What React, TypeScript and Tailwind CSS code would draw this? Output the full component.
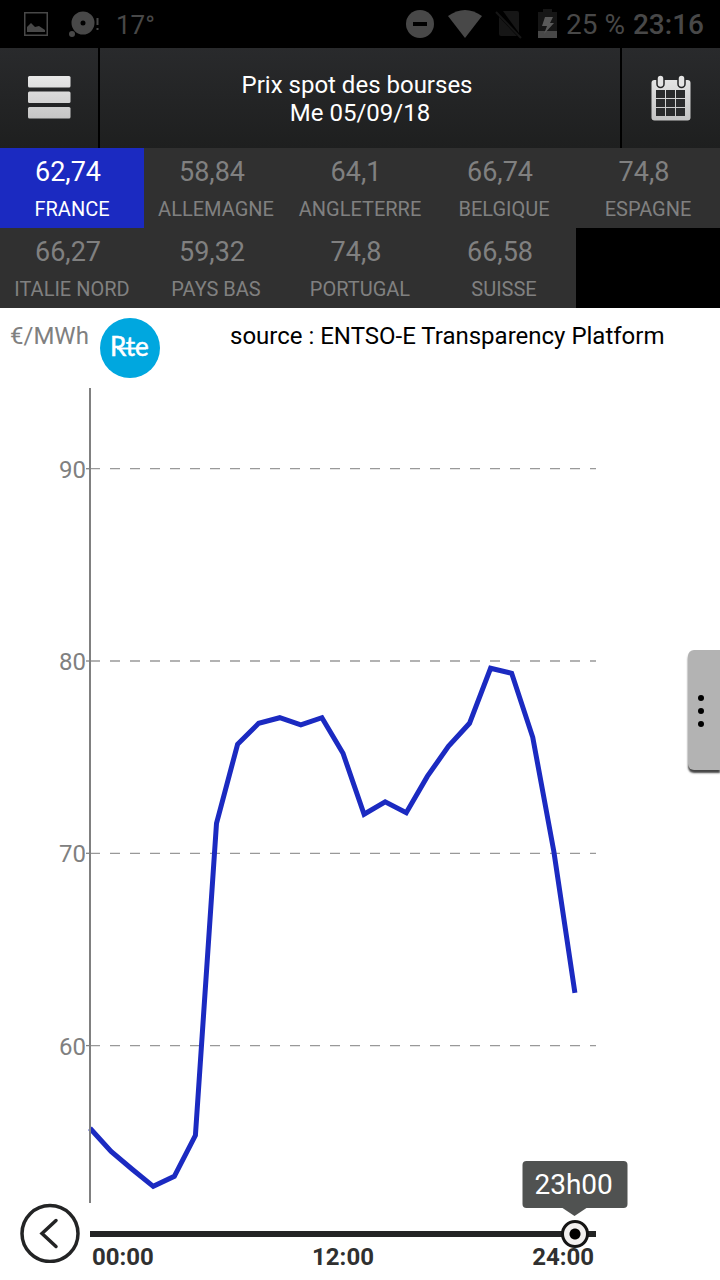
import { useState } from "react";

type Market = { name: string; price: string };

const markets: Market[] = [
  { name: "FRANCE", price: "62,74" },
  { name: "ALLEMAGNE", price: "58,84" },
  { name: "ANGLETERRE", price: "64,1" },
  { name: "BELGIQUE", price: "66,74" },
  { name: "ESPAGNE", price: "74,8" },
  { name: "ITALIE NORD", price: "66,27" },
  { name: "PAYS BAS", price: "59,32" },
  { name: "PORTUGAL", price: "74,8" },
  { name: "SUISSE", price: "66,58" },
];

// hourly prices, €/MWh
const prices = [
  55.7, 54.5, 53.57, 52.68, 53.2, 55.33, 71.56, 75.67, 76.76, 77.05, 76.68,
  77.05, 75.2, 72.03, 72.68, 72.11, 74.0, 75.56, 76.76, 79.62, 79.36, 76.03,
  70.1, 62.74,
];

const ticks = [90, 80, 70, 60];

const LEFT = 90;
const RIGHT = 596;

const xOf = (hour: number) => LEFT + ((RIGHT - LEFT) * hour) / 24;
const yOf = (price: number) => 80.7 + (90 - price) * 19.23;

function StatusBar() {
  return (
    <div className="flex h-12 items-center bg-black pl-6 pr-4 text-[#484848]">
      <svg width="24" height="24" viewBox="0 0 24 24" aria-hidden="true">
        <rect x="0.75" y="0.75" width="22.5" height="22.5" fill="none" stroke="currentColor" strokeWidth="1.5" />
        <path d="M3 20v-5l4-4 4 4 4-1 6 4v2z" fill="currentColor" />
      </svg>
      <svg className="ml-5" width="32" height="28" viewBox="0 0 32 28" aria-hidden="true">
        <circle cx="15" cy="13" r="7" fill="none" stroke="currentColor" strokeWidth="9" />
        <circle cx="4" cy="24" r="3" fill="currentColor" />
        <path d="M29.5 8v7M29.5 18v2" stroke="currentColor" strokeWidth="2" />
      </svg>
      <span className="ml-4 pt-0.5 text-[26px]">17°</span>

      <svg className="ml-auto" width="28" height="28" viewBox="0 0 28 28" aria-hidden="true">
        <circle cx="14" cy="14" r="14" fill="currentColor" />
        <path d="M7 14h14" stroke="black" strokeWidth="4" />
      </svg>
      <svg className="ml-3.5" width="34" height="28" viewBox="0 0 34 28" aria-hidden="true">
        <path d="M0 6Q17-6 34 6L17 28z" fill="currentColor" />
      </svg>
      <svg className="ml-3 text-[#161616]" width="28" height="30" viewBox="0 0 28 30" aria-hidden="true">
        <path d="M9 2h14q2 0 2 2v20zM5 8l18 19H7q-2 0-2-2z" fill="currentColor" />
        <path d="M2 3l25 26" stroke="currentColor" strokeWidth="2" />
      </svg>
      <svg className="ml-4" width="20" height="30" viewBox="0 0 20 30" aria-hidden="true">
        <path d="M0 3h5V0h9v3h5v20H0z" fill="#161616" />
        <path d="M0 22h19v7H0z" fill="currentColor" />
        <path d="M7 8h8l-3 6h4L6 25l3-8H4z" fill="#5a5a5a" />
      </svg>
      <span className="ml-2 pt-0.5 text-[28px]">25 %</span>
      <span className="ml-2 pt-0.5 text-[28px] font-medium">23:16</span>
    </div>
  );
}

function Header() {
  return (
    <header className="flex h-[100px] bg-linear-to-b from-[#292a2c] to-[#1e1f1f]">
      <button
        type="button"
        aria-label="Menu"
        className="flex w-[100px] items-center justify-center border-r-2 border-black"
      >
        <svg width="44" height="44" viewBox="0 0 44 44" aria-hidden="true">
          <defs>
            <linearGradient id="metal" x1="0" y1="0" x2="0" y2="44" gradientUnits="userSpaceOnUse">
              <stop offset="0" stopColor="#e8e8e8" />
              <stop offset="1" stopColor="#c4c4c4" />
            </linearGradient>
          </defs>
          <g fill="url(#metal)">
            <rect x="1" y="0" width="42.5" height="11.5" rx="1.5" />
            <rect x="1" y="15.5" width="42.5" height="11.5" rx="1.5" />
            <rect x="1" y="31" width="42.5" height="11.5" rx="1.5" />
          </g>
        </svg>
      </button>
      <h1 className="flex-1 self-center pt-0.5 text-center text-2xl leading-7 text-white">
        Prix spot des bourses&nbsp;
        <br />
        Me 05/09/18
      </h1>
      <button
        type="button"
        aria-label="Calendrier"
        className="flex w-[100px] items-center justify-center border-l-2 border-black"
      >
        <svg width="40" height="46" viewBox="0 0 40 46" aria-hidden="true">
          <rect x="0.5" y="5" width="39" height="40.5" rx="3" fill="url(#metal)" />
          <g fill="#2a2b2c">
            {[15, 24, 33].map((y) =>
              [5, 15, 25].map((x) => (
                <rect key={`${x}-${y}`} x={x} y={y} width="9" height="8" />
              ))
            )}
          </g>
          <g fill="#e4e4e4" stroke="#242526" strokeWidth="1.5">
            <rect x="6" y="0" width="7" height="12.5" rx="3.5" />
            <rect x="27" y="0" width="7" height="12.5" rx="3.5" />
          </g>
        </svg>
      </button>
    </header>
  );
}

function MarketTile({
  market,
  active,
  onSelect,
}: {
  market: Market;
  active: boolean;
  onSelect: () => void;
}) {
  return (
    <button
      type="button"
      aria-pressed={active}
      onClick={onSelect}
      className={`h-20 whitespace-nowrap text-center ${
        active ? "bg-[#1b2ac1] text-white" : "bg-[#303030] text-[#808080]"
      }`}
    >
      <span className="block h-11 pr-2 text-[27px] leading-[48px]">{market.price}</span>
      <span className="block h-9 text-xl leading-[34px]">{market.name}</span>
    </button>
  );
}

function RteLogo() {
  return (
    <svg width="60" height="60" viewBox="0 0 60 60" role="img" aria-label="Rte">
      <circle cx="30" cy="30" r="30" fill="#00a7df" />
      <text
        x="10"
        y="38"
        fill="white"
        stroke="white"
        strokeWidth="0.5"
        fontFamily="Lato, sans-serif"
        fontSize="26"
      >
        Rte
      </text>
      <path d="M17 30.5h29" stroke="white" strokeWidth="2" />
    </svg>
  );
}

function PriceChart() {
  const points = prices.map((p, h) => `${xOf(h)},${yOf(p)}`).join(" ");

  return (
    <svg className="block w-full" viewBox="0 0 720 815" role="img" aria-label="Prix spot par heure">
      {ticks.map((tick) => (
        <g key={tick}>
          <text x="86" y={yOf(tick) + 9} textAnchor="end" fontSize="24" fill="#808080">
            {tick}
          </text>
          <path
            d={`M90 ${yOf(tick)}H${RIGHT}`}
            stroke="#999999"
            strokeWidth="1.3"
            strokeDasharray="10 10"
          />
          <path d={`M86 ${yOf(tick)}h4`} stroke="#808080" strokeWidth="1.3" />
        </g>
      ))}
      <polyline points={points} fill="none" stroke="#1b2ac1" strokeWidth="5" />
      <path d="M90 0V815" stroke="#808080" strokeWidth="2" />
    </svg>
  );
}

function HourSlider({ hour, onChange }: { hour: number; onChange: (h: number) => void }) {
  return (
    <div className="flex items-start pl-5 pr-[124px]">
      <button type="button" aria-label="Heure précédente" onClick={() => onChange(Math.max(0, hour - 1))}>
        <svg width="60" height="60" viewBox="0 0 60 60" fill="none" stroke="#232425" aria-hidden="true">
          <circle cx="30" cy="30.5" r="28" strokeWidth="3.5" />
          <path d="M36 17.5L22 30.5L36 43.5" strokeWidth="3.5" strokeLinecap="round" />
        </svg>
      </button>
      <div className="relative ml-2.5 flex-1 pt-7">
        <div className="h-1.5 bg-[#232425]" />
        <input
          type="range"
          aria-label="Heure"
          min={0}
          max={24}
          value={hour}
          onChange={(e) => onChange(Number(e.target.value))}
          className="absolute -left-3.5 top-[17px] h-7 w-[calc(100%+28px)] appearance-none bg-transparent [&::-webkit-slider-thumb]:size-7 [&::-webkit-slider-thumb]:appearance-none [&::-webkit-slider-thumb]:rounded-full [&::-webkit-slider-thumb]:border-3 [&::-webkit-slider-thumb]:border-[#151515] [&::-webkit-slider-thumb]:bg-[radial-gradient(circle,#000_5px,#f3f1f0_6px)]"
        />
        <output
          className="absolute -top-[42px] h-[47px] w-[105px] -translate-x-1/2 rounded-[4px] bg-[#505251] pl-3 text-[28px] leading-[47px] text-white after:absolute after:left-1/2 after:top-full after:-translate-x-1/2 after:border-x-[12px] after:border-t-8 after:border-x-transparent after:border-t-[#505251]"
          style={{ left: `${(hour / 24) * 100}%` }}
        >
          {hour}h00
        </output>
        <div className="flex justify-between px-0.5 pt-1.5 text-2xl leading-7 font-bold text-[#303030]">
          <span>00:00</span>
          <span>12:00</span>
          <span>24:00</span>
        </div>
      </div>
    </div>
  );
}

export default function App() {
  const [selected, setSelected] = useState(0);
  const [hour, setHour] = useState(23);

  return (
    <div className="relative min-h-screen overflow-hidden bg-white font-[Roboto,sans-serif]">
      <StatusBar />
      <Header />
      <div className="grid grid-cols-5 bg-black">
        {markets.map((m, i) => (
          <MarketTile
            key={m.name}
            market={m}
            active={i === selected}
            onSelect={() => setSelected(i)}
          />
        ))}
      </div>

      <main>
        <div className="flex h-20 items-start pl-2.5 pt-2.5">
          <span className="w-[90px] text-2xl leading-9 text-[#808080]">€/MWh</span>
          <RteLogo />
          <p className="ml-[70px] text-2xl leading-9 text-black">
            source : ENTSO-E Transparency Platform
          </p>
        </div>
        <PriceChart />
        <HourSlider hour={hour} onChange={setHour} />
      </main>

      {/* side drawer handle */}
      <button
        type="button"
        aria-label="Options"
        className="absolute right-0 top-[650px] flex h-[120px] w-8 flex-col items-start justify-center gap-[7px] rounded-l-md bg-[#b3b3b3] pl-2.5 pt-0.5 shadow-[0_3px_2px_#444]"
      >
        <span className="size-1.5 rounded-full bg-black" />
        <span className="size-1.5 rounded-full bg-black" />
        <span className="size-1.5 rounded-full bg-black" />
      </button>
    </div>
  );
}
